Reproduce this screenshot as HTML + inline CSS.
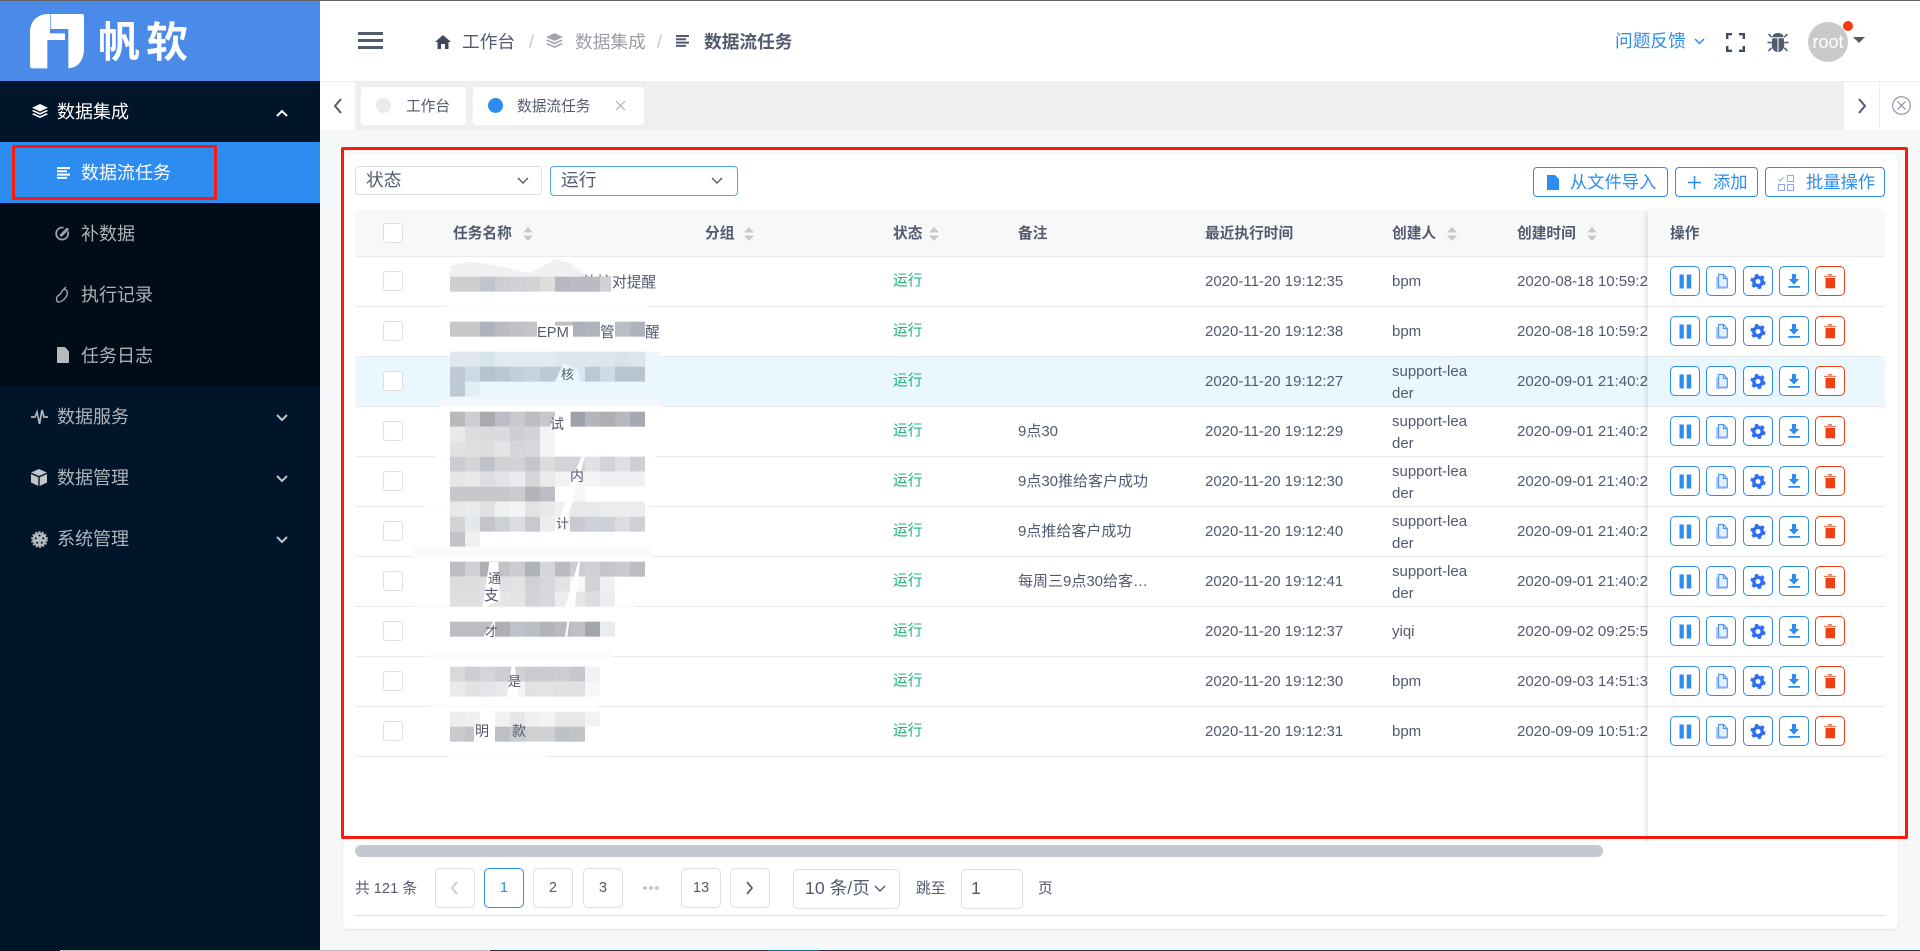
<!DOCTYPE html>
<html lang="zh"><head><meta charset="utf-8"><title>数据流任务</title>
<style>
*{box-sizing:border-box}
html,body{margin:0;padding:0;width:1920px;height:951px;overflow:hidden;background:#f5f7f9;font-family:"Liberation Sans","Noto Sans CJK SC",sans-serif;color:#515a6e}
.a,.r span,.r i,.r b{position:absolute;white-space:nowrap}
.m{font-size:18px;line-height:24px;height:24px;left:57px;color:rgba(255,255,255,.68)}
.s{left:81px;}
.f18{font-size:17.7px;line-height:24px;height:24px}
.f15{font-size:14.7px;line-height:22px;height:22px}
.r{position:absolute;left:355px;width:1293px;height:50px;border-bottom:1px solid #e8eaec;font-size:15px;line-height:21.5px}
.r i{left:28px;top:14px;width:20px;height:20px;border:1px solid #dcdee2;border-radius:3px;background:#fff}
.r .st{left:538px;top:14px;color:#1fb37a;font-size:14.7px}
.r .re{left:663px;top:14px}
.r .t{left:850px;top:14px}
.r .u{left:1037px;top:14px}
.r .u2{left:1037px;top:4px}
.r .c{left:1162px;top:14px}
.h{position:absolute;top:210px;font-size:14.7px;line-height:22px;height:22px;margin-top:13px;font-weight:bold;color:#515a6e;white-space:nowrap}
.sort{position:absolute;top:227px;width:10px;height:14px}
.ops{position:absolute;left:0;width:237px;height:50px;border-bottom:1px solid #e8eaec}
.b{position:absolute;top:9px;width:30px;height:30px;border:1px solid #2d8cf0;border-radius:5px;background:#fff}
.b svg{position:absolute;left:-1px;top:-1px;width:30px;height:30px}
.b.d{border-color:#ed4014}
.pg{position:absolute;top:868px;width:40px;height:40px;border:1px solid #dcdee2;border-radius:5px;text-align:center;font-size:14.7px;line-height:38px;background:#fff}
.btn{position:absolute;top:167px;height:30px;border:1px solid #2d8cf0;border-radius:4px;background:#fff}
.bt{position:absolute;top:170px;font-size:17.3px;line-height:24px;color:#2d8cf0;white-space:nowrap}
svg.i{position:absolute;overflow:visible}
#blur rect{width:15px;height:15px}
#blur rect.w{height:3px}
#blur rect.x{height:auto}
</style></head><body>
<svg width="0" height="0" style="position:absolute"><defs>
<symbol id="pa" viewBox="0 0 30 30"><rect x="9.5" y="8.5" width="4.3" height="14" fill="#2d8cf0"/><rect x="16.7" y="8.5" width="4.5" height="14" fill="#2d8cf0"/></symbol>
<symbol id="do" viewBox="0 0 30 30"><path d="M10 11h3v11h8v1H10z" fill="#b9c8fb"/><path d="M12.5 8.5h5l3.8 4v8.7h-8.8z M17.5 8.5v4h3.8" fill="#e6f0fd" stroke="#4b98f2" stroke-width="1.2"/></symbol>
<symbol id="ge" viewBox="0 0 30 30"><circle cx="15" cy="15.5" r="4.2" fill="none" stroke="#2d6ff0" stroke-width="3.4"/><circle cx="15" cy="15.5" r="6.4" fill="none" stroke="#2d6ff0" stroke-width="2.4" stroke-dasharray="3.4 3.3"/></symbol>
<symbol id="dl" viewBox="0 0 30 30"><path d="M13 8h4v5h3.2L15 18.6 9.800 13H13z" fill="#2d8cf0"/><rect x="9.300" y="20" width="11.700" height="1.800" fill="#2d8cf0"/></symbol>
<symbol id="tr" viewBox="0 0 30 30"><rect x="10.500" y="12" width="9.500" height="10.300" fill="#f0400f"/><rect x="9" y="9.800" width="12" height="1.400" fill="#f47f5f"/><rect x="13" y="8" width="4" height="1.600" fill="#f47f5f"/></symbol>
<symbol id="sc" viewBox="0 0 10 14"><path d="M5 0l5 5.500H0zM5 14L0 8.500h10z" fill="#c5c8ce"/></symbol>
<symbol id="la" viewBox="0 0 16 14"><path d="M8 0l8 3.700-8 3.800L0 3.700z" fill="currentColor"/><path d="M1.500 6L8 9l6.500-3L16 7l-8 3.700L0 7z" fill="currentColor"/><path d="M1.500 9.300l6.500 3 6.500-3L16 10.300 8 14 0 10.300z" fill="currentColor"/></symbol>
<symbol id="li" viewBox="0 0 13 12"><path d="M0 0h13v2H0zM0 3.300h10v2H0zM0 6.600h13v2H0zM0 9.900h10v2H0z" fill="currentColor"/></symbol>
</defs></svg>

<!-- sidebar -->
<div class="a" style="left:0;top:0;width:320px;height:951px;background:#00152a"></div>
<div class="a" style="left:0;top:0;width:320px;height:81px;background:#4a8be9"></div>
<svg class="i" style="left:20px;top:5px" width="70" height="70" viewBox="0 0 210 210"><path fill="#fff" d="M80 27C50 30 30 50 30 82V183Q30 190 38 190H82V105H135V85H90V27z"/><path fill="#fff" d="M92 27H185Q192 27 192 34V130C192 165 175 188 145 190V72H92z"/></svg>
<div class="a" style="left:98px;top:15px;font-size:42px;line-height:56px;font-weight:bold;color:#fff;letter-spacing:6px">帆软</div>
<div class="a" style="left:0;top:142px;width:320px;height:244px;background:#000c18"></div>
<div class="a" style="left:0;top:142px;width:320px;height:61px;background:#2d8cf0"></div>
<div class="a" style="left:12px;top:145px;width:205px;height:55px;border:3px solid #fa1a0c;border-radius:2px"></div>

<svg class="i" style="left:32px;top:104px;color:#fff" width="16" height="14"><use href="#la"/></svg>
<div class="a m" style="top:100px;color:#fff">数据集成</div>
<svg class="i" style="left:276px;top:109px" width="12" height="8" fill="none" stroke="#fff" stroke-width="2"><path d="M1 7l5-5 5 5"/></svg>

<svg class="i" style="left:57px;top:167px;color:#fff" width="13" height="12"><use href="#li"/></svg>
<div class="a m s" style="top:161px;color:#fff">数据流任务</div>

<svg class="i" style="left:55px;top:226px" width="15" height="15" fill="none" stroke="#9ea2a7" stroke-width="1.800"><path d="M12.800 5.500A6 6 0 1 1 8.500 1.700"/><path d="M5.500 10L13 2.500" stroke-width="3"/></svg>
<div class="a m s" style="top:222px">补数据</div>
<svg class="i" style="left:55px;top:286px" width="15" height="17" fill="none" stroke="#9ea2a7" stroke-width="1.400"><path d="M9 3c3 1 4 3 3 6-1 3-5 7-8.500 7C1.500 16 1 13 2 11c1-2 3-2 4-4 .5-1 .8-2 3-4zM9 3l2-2"/></svg>
<div class="a m s" style="top:283px">执行记录</div>
<svg class="i" style="left:57px;top:347px" width="12" height="16"><path d="M1 0h7l4 4.500V15a1 1 0 0 1-1 1H1a1 1 0 0 1-1-1V1a1 1 0 0 1 1-1z" fill="#b7babd"/></svg>
<div class="a m s" style="top:344px">任务日志</div>

<svg class="i" style="left:31px;top:408px" width="17" height="18" fill="none" stroke="#b2b6bb" stroke-width="1.700"><path d="M0 9h4l2-5 2.500 12L11 2l2 7h4"/></svg>
<div class="a m" style="top:405px">数据服务</div>
<svg class="i" style="left:31px;top:469px" width="16" height="17"><path d="M8 0l8 3.500L8 7 0 3.500z" fill="#c2c5c9"/><path d="M0 5l7.300 3.200V17L0 13.500zM16 5L8.700 8.200V17l7.300-3.500z" fill="#c2c5c9"/></svg>
<div class="a m" style="top:466px">数据管理</div>
<svg class="i" style="left:31px;top:531px" width="17" height="17"><circle cx="8.500" cy="8.500" r="7" fill="#b5b8bc"/><circle cx="8.500" cy="8.500" r="7.700" fill="none" stroke="#b5b8bc" stroke-width="1.400" stroke-dasharray="2 1.500"/><circle cx="8.500" cy="4.500" r="1" fill="#00152a"/><circle cx="4.700" cy="7.300" r="1" fill="#00152a"/><circle cx="12.300" cy="7.300" r="1" fill="#00152a"/><circle cx="6.200" cy="11.700" r="1" fill="#00152a"/><circle cx="10.800" cy="11.700" r="1" fill="#00152a"/></svg>
<div class="a m" style="top:527px">系统管理</div>
<svg class="i" style="left:276px;top:414px" width="12" height="8" fill="none" stroke="#c0c4c9" stroke-width="2"><path d="M1 1l5 5 5-5"/></svg>
<svg class="i" style="left:276px;top:475px" width="12" height="8" fill="none" stroke="#c0c4c9" stroke-width="2"><path d="M1 1l5 5 5-5"/></svg>
<svg class="i" style="left:276px;top:536px" width="12" height="8" fill="none" stroke="#c0c4c9" stroke-width="2"><path d="M1 1l5 5 5-5"/></svg>

<!-- header -->
<div class="a" style="left:320px;top:0;width:1600px;height:81px;background:#fff"></div>
<div class="a" style="left:320px;top:81px;width:1600px;height:1px;background:#eceef0"></div>
<div class="a" style="left:358px;top:32px;width:25px;height:3px;background:#515a6e"></div>
<div class="a" style="left:358px;top:39px;width:25px;height:3px;background:#515a6e"></div>
<div class="a" style="left:358px;top:46px;width:25px;height:3px;background:#515a6e"></div>
<svg class="i" style="left:435px;top:35px" width="16" height="14"><path d="M8 0l8 7h-2.500v7H10V9H6v5H2.500V7H0z" fill="#3f4a5e"/></svg>
<div class="a f18" style="left:462px;top:30px">工作台</div>
<div class="a f18" style="left:529px;top:30px;color:#c5c8ce">/</div>
<svg class="i" style="left:546px;top:33px;color:#a2a6ac" width="17" height="15"><use href="#la"/></svg>
<div class="a f18" style="left:575px;top:30px;color:#9a9ea5">数据集成</div>
<div class="a f18" style="left:657px;top:30px;color:#c5c8ce">/</div>
<svg class="i" style="left:676px;top:35px;color:#515a6e" width="13" height="12"><use href="#li"/></svg>
<div class="a f18" style="left:704px;top:30px;font-weight:bold">数据流任务</div>
<div class="a f18" style="left:1615px;top:29px;color:#2d8cf0">问题反馈</div>
<svg class="i" style="left:1694px;top:38px" width="11" height="7" fill="none" stroke="#2d8cf0" stroke-width="1.500"><path d="M1 1l4.500 4.500L10 1"/></svg>
<svg class="i" style="left:1726px;top:33px" width="19" height="19" fill="none" stroke="#3f4a5e" stroke-width="2.400"><path d="M1.200 6V1.200H6M13 1.200h4.800V6M1.200 13v4.800H6M13 17.800h4.800V13"/></svg>
<svg class="i" style="left:1767px;top:32px" width="22" height="21" viewBox="0 0 20 20"><path d="M10 1c3 0 5 1.500 5.500 4h-11C5 2.500 7 1 10 1z" fill="#515a6e"/><path d="M4.500 6h5V19C6.500 19 4 16 4 12zM10.500 6h5l.5 6c0 4-2.500 7-5.500 7z" fill="#515a6e"/><path d="M4 5L1 2M16 5l3-3M4 10H0M16 10h4M4 15l-3 3M16 15l3 3" stroke="#515a6e" stroke-width="1.500"/></svg>
<div class="a" style="left:1808px;top:22px;width:40px;height:40px;border-radius:50%;background:#c9c9c9;color:#fff;font-size:18px;line-height:40px;text-align:center">root</div>
<div class="a" style="left:1843px;top:21px;width:10px;height:10px;border-radius:50%;background:#f03c14"></div>
<svg class="i" style="left:1853px;top:37px" width="12" height="6"><path d="M0 0h12L6 6z" fill="#515a6e"/></svg>

<!-- tags -->
<div class="a" style="left:320px;top:82px;width:1600px;height:48px;background:#fff"></div>
<div class="a" style="left:355px;top:82px;width:1489px;height:48px;background:#efefef"></div>
<div class="a" style="left:1879px;top:82px;width:1px;height:48px;background:#eceef0"></div>
<svg class="i" style="left:333px;top:98px" width="10" height="16" fill="none" stroke="#515a6e" stroke-width="2"><path d="M8 1L2 8l6 7"/></svg>
<svg class="i" style="left:1857px;top:98px" width="10" height="16" fill="none" stroke="#515a6e" stroke-width="2"><path d="M2 1l6 7-6 7"/></svg>
<svg class="i" style="left:1892px;top:96px" width="19" height="19" fill="none" stroke="#7d8594" stroke-width="1"><circle cx="9.500" cy="9.500" r="8.800"/><path d="M5.500 5.500l8 8M13.500 5.500l-8 8"/></svg>
<div class="a" style="left:361px;top:87px;width:105px;height:38px;background:#fff;border-radius:3px"></div>
<div class="a" style="left:473px;top:87px;width:171px;height:38px;background:#fff;border-radius:3px"></div>
<div class="a" style="left:376px;top:98px;width:15px;height:15px;border-radius:50%;background:#e8eaec"></div>
<div class="a f15" style="left:406px;top:96px">工作台</div>
<div class="a" style="left:488px;top:98px;width:15px;height:15px;border-radius:50%;background:#2d8cf0"></div>
<div class="a f15" style="left:517px;top:96px">数据流任务</div>
<svg class="i" style="left:615px;top:100px" width="11" height="11" fill="none" stroke="#a6abb3" stroke-width="1"><path d="M1 1l9 9M10 1l-9 9"/></svg>

<!-- card -->
<div class="a" style="left:343px;top:154px;width:1555px;height:775px;background:#fff;border-radius:6px;box-shadow:0 1px 2px rgba(0,0,0,.08)"></div>

<div class="a" style="left:355px;top:166px;width:187px;height:29px;border:1px solid #dcdee2;border-radius:4px"></div>
<div class="a f18" style="left:366px;top:168px">状态</div>
<svg class="i" style="left:517px;top:177px" width="12" height="8" fill="none" stroke="#515a6e" stroke-width="1.400"><path d="M1 1l5 5 5-5"/></svg>
<div class="a" style="left:550px;top:166px;width:188px;height:30px;border:1px solid #57a3f3;border-radius:4px"></div>
<div class="a f18" style="left:561px;top:168px">运行</div>
<svg class="i" style="left:711px;top:177px" width="12" height="8" fill="none" stroke="#515a6e" stroke-width="1.400"><path d="M1 1l5 5 5-5"/></svg>

<div class="btn" style="left:1533px;width:135px"></div>
<svg class="i" style="left:1547px;top:175px" width="12" height="15"><path d="M0 0h8l4 4v11H0z" fill="#2d8cf0"/></svg>
<div class="bt" style="left:1570px">从文件导入</div>
<div class="btn" style="left:1675px;width:83px"></div>
<svg class="i" style="left:1688px;top:176px" width="13" height="13" stroke="#2d8cf0" stroke-width="1.500"><path d="M6.500 0v13M0 6.500h13"/></svg>
<div class="bt" style="left:1713px">添加</div>
<div class="btn" style="left:1765px;width:120px"></div>
<svg class="i" style="left:1778px;top:174px" width="16" height="17" fill="none" stroke="#8fa8f0" stroke-width="1"><path d="M.5 5l2 2 3-4"/><rect x="9.500" y="1.500" width="6" height="6"/><rect x=".5" y="10.500" width="6" height="6"/><rect x="9.500" y="10.500" width="6" height="6"/></svg>
<div class="bt" style="left:1806px">批量操作</div>

<!-- table header -->
<div class="a" style="left:355px;top:210px;width:1530px;height:47px;background:#f8f8f9;border-bottom:1px solid #e8eaec"></div>
<div class="a" style="left:383px;top:223px;width:20px;height:20px;border:1px solid #dcdee2;border-radius:3px;background:#fff"></div>
<div class="h" style="left:453px">任务名称</div><svg class="sort" style="left:523px"><use href="#sc"/></svg>
<div class="h" style="left:705px">分组</div><svg class="sort" style="left:744px"><use href="#sc"/></svg>
<div class="h" style="left:893px">状态</div><svg class="sort" style="left:929px"><use href="#sc"/></svg>
<div class="h" style="left:1018px">备注</div>
<div class="h" style="left:1205px">最近执行时间</div>
<div class="h" style="left:1392px">创建人</div><svg class="sort" style="left:1447px"><use href="#sc"/></svg>
<div class="h" style="left:1517px">创建时间</div><svg class="sort" style="left:1587px"><use href="#sc"/></svg>

<!-- rows -->
<div class="r" style="top:257px"><i></i><span class="st">运行</span><span class="t">2020-11-20 19:12:35</span><span class="u">bpm</span><span class="c">2020-08-18 10:59:28</span></div>
<div class="r" style="top:307px"><i></i><span class="st">运行</span><span class="t">2020-11-20 19:12:38</span><span class="u">bpm</span><span class="c">2020-08-18 10:59:28</span></div>
<div class="r" style="top:357px;background:#ebf7ff"><i></i><span class="st">运行</span><span class="t">2020-11-20 19:12:27</span><span class="u2">support-lea<br>der</span><span class="c">2020-09-01 21:40:28</span></div>
<div class="r" style="top:407px"><i></i><span class="st">运行</span><span class="re">9点30</span><span class="t">2020-11-20 19:12:29</span><span class="u2">support-lea<br>der</span><span class="c">2020-09-01 21:40:28</span></div>
<div class="r" style="top:457px"><i></i><span class="st">运行</span><span class="re">9点30推给客户成功</span><span class="t">2020-11-20 19:12:30</span><span class="u2">support-lea<br>der</span><span class="c">2020-09-01 21:40:28</span></div>
<div class="r" style="top:507px"><i></i><span class="st">运行</span><span class="re">9点推给客户成功</span><span class="t">2020-11-20 19:12:40</span><span class="u2">support-lea<br>der</span><span class="c">2020-09-01 21:40:28</span></div>
<div class="r" style="top:557px"><i></i><span class="st">运行</span><span class="re">每周三9点30给客…</span><span class="t">2020-11-20 19:12:41</span><span class="u2">support-lea<br>der</span><span class="c">2020-09-01 21:40:28</span></div>
<div class="r" style="top:607px"><i></i><span class="st">运行</span><span class="t">2020-11-20 19:12:37</span><span class="u">yiqi</span><span class="c">2020-09-02 09:25:58</span></div>
<div class="r" style="top:657px"><i></i><span class="st">运行</span><span class="t">2020-11-20 19:12:30</span><span class="u">bpm</span><span class="c">2020-09-03 14:51:38</span></div>
<div class="r" style="top:707px"><i></i><span class="st">运行</span><span class="t">2020-11-20 19:12:31</span><span class="u">bpm</span><span class="c">2020-09-09 10:51:28</span></div>

<!-- pixelated blur -->
<svg id="blur" class="i" style="left:0;top:0" width="1920" height="951" font-size="14.700" fill="#515a6e" font-family="Liberation Sans,Noto Sans CJK SC,sans-serif">
<rect class="w" x="445" y="305" width="203" fill="#fdfdfd" style="width:203px"/>
<rect class="w" x="440" y="405" style="width:222px" fill="#fdfdfd"/>
<rect class="w" x="435" y="455" style="width:220px" fill="#fdfdfd"/>
<rect class="w" x="423" y="505" style="width:227px" fill="#fdfdfd"/>
<rect class="w" x="413" y="555" style="width:240px" fill="#fcfcfc"/>
<rect class="w" x="415" y="605" style="width:220px" fill="#fcfcfc"/>
<rect class="w" x="427" y="655" style="width:185px" fill="#fbfbfb"/>
<rect class="w" x="428" y="705" style="width:169px" fill="#fbfbfb"/>
<rect class="w" x="447" y="755" style="width:100px" fill="#fdfdfd"/>
<text x="582" y="287">效核</text>
<text x="612" y="287">对提醒</text>
<text x="537" y="337">EPM</text><text x="600" y="337">管</text><text x="645" y="337">醒</text>
<path d="M450 276.700V266L470 261.700 493 265 530 273 556 259 570 263 587 276.700z" fill="#eef0f1"/>
<g transform="translate(0 276.670)"><rect x="450" fill="#cfcfd1"/><rect x="465" fill="#cfcfd1"/><rect x="480" fill="#c0c5cd"/><rect x="495" fill="#cdcfd4"/><rect x="510" fill="#d0d1d4"/><rect x="525" fill="#d2d3d6"/><rect x="540" fill="#dcdedc"/><rect x="555" fill="#b7b8bf"/><rect x="570" fill="#babcc3"/><rect x="585" fill="#bbbcc2"/><rect x="600" fill="#d0d1d4" style="width:11px"/></g>
<g transform="translate(0 321.670)"><rect x="450" fill="#c7c7ca"/><rect x="465" fill="#c7c7ca"/><rect x="480" fill="#adb2bc"/><rect x="495" fill="#bbbcc2"/><rect x="510" fill="#c0c1c5"/><rect x="522" fill="#c3c4c8"/><rect x="573" fill="#adb1bb"/><rect x="585" fill="#aeb3bc"/><rect x="615" fill="#bbbdc4"/><rect x="630" fill="#aeb2bb"/></g>
<rect x="555" y="321.670" fill="#bfc1c7" style="width:18px;height:4px"/>
<g transform="translate(0 351.670)"><rect x="450" fill="#dfe6ee"/><rect x="465" fill="#dfe6ee"/><rect x="480" fill="#d8e4ec"/><rect x="495" fill="#e2eaf1"/><rect x="510" fill="#e2eaf1"/><rect x="525" fill="#e2eaf1"/><rect x="540" fill="#e2eaf1"/><rect x="555" fill="#dce6ee"/><rect x="570" fill="#dce6ee"/><rect x="585" fill="#dce6ee"/><rect x="600" fill="#dde6ee"/><rect x="615" fill="#d9e2ea"/><rect x="630" fill="#dde5ec"/><rect x="645" fill="#edf5fc"/></g>
<g transform="translate(0 366.670)"><rect x="450" fill="#c0cad5"/><rect x="465" fill="#cbdbe6"/><rect x="480" fill="#b7c4ce"/><rect x="495" fill="#bac6d0"/><rect x="510" fill="#c3d0d9"/><rect x="525" fill="#c7d4dd"/><rect x="540" fill="#bccad4"/><rect x="555" fill="#bccad4"/><rect x="570" fill="#dce6ee"/><rect x="585" fill="#b9c9d5"/><rect x="600" fill="#cbdce6"/><rect x="615" fill="#b8c5cf"/><rect x="630" fill="#b8c5cf"/><rect x="645" fill="#edf5fc"/></g>
<g transform="translate(0 381.670)"><rect x="450" fill="#bfc9d4"/><rect x="465" fill="#e1eef6"/></g>
<rect class="x" x="440" y="396.670" style="width:222px;height:9px" fill="#f1f7fd"/>
<g transform="translate(0 411.670)"><rect x="450" fill="#b9b9bd"/><rect x="465" fill="#cdced1"/><rect x="480" fill="#a9aab0"/><rect x="495" fill="#bcbec5"/><rect x="510" fill="#c9cace"/><rect x="525" fill="#bcbdc2"/><rect x="540" fill="#c6c7ca"/><rect x="570" fill="#a0a2ab"/><rect x="585" fill="#b3b5bb"/><rect x="600" fill="#aeaeb3"/><rect x="615" fill="#b4b8bf"/><rect x="630" fill="#a8a9b0"/></g>
<g transform="translate(0 426.670)"><rect x="450" fill="#e8e9ea"/><rect x="465" fill="#dcdcde"/><rect x="480" fill="#dadadd"/><rect x="495" fill="#dadbde"/><rect x="510" fill="#d0ced3"/><rect x="525" fill="#d2d2d7"/><rect x="540" fill="#f3f4f6"/></g>
<g transform="translate(0 441.670)"><rect x="450" fill="#e2e2e3"/><rect x="465" fill="#dddee0"/><rect x="480" fill="#dcdddf"/><rect x="495" fill="#e3e4e6"/><rect x="510" fill="#d5d6da"/><rect x="525" fill="#d7d8dc"/><rect x="540" fill="#f3f4f6"/></g>
<g transform="translate(0 456.670)"><rect x="450" fill="#cccdd0"/><rect x="465" fill="#d4d5d8"/><rect x="480" fill="#bfc2c8"/><rect x="495" fill="#cfd1d5"/><rect x="510" fill="#d2d3d6"/><rect x="525" fill="#c3c6cb"/><rect x="540" fill="#dbdcde"/><rect x="555" fill="#d2d3d7"/><rect x="570" fill="#d2d3d7"/><rect x="585" fill="#e0e1e4"/><rect x="600" fill="#d2d3d7"/><rect x="615" fill="#dfe0e3"/><rect x="630" fill="#ced0d4"/></g>
<g transform="translate(0 471.670)"><rect x="450" fill="#e6e6e7"/><rect x="465" fill="#e9e9ea"/><rect x="480" fill="#dedee0"/><rect x="495" fill="#e4e4e6"/><rect x="510" fill="#ebebed"/><rect x="525" fill="#d5d6d9"/><rect x="540" fill="#ebebed"/><rect x="555" fill="#f3f3f4"/><rect x="570" fill="#f3f4f5"/><rect x="585" fill="#f3f4f5"/><rect x="600" fill="#f0f0f2"/><rect x="615" fill="#efeff1"/><rect x="630" fill="#eff0f2"/></g>
<g transform="translate(0 486.670)"><rect x="450" fill="#c7c8cb"/><rect x="465" fill="#c7c8cb"/><rect x="480" fill="#c7c8cb"/><rect x="495" fill="#c7c8cb"/><rect x="510" fill="#cbccd0"/><rect x="525" fill="#b2b4ba"/><rect x="540" fill="#bbbdc3"/><rect x="570" fill="#f5f6f7"/></g>
<g transform="translate(0 501.670)"><rect x="450" fill="#e7e8ea"/><rect x="465" fill="#e9eaeb"/><rect x="480" fill="#e0e1e3"/><rect x="495" fill="#eff0f1"/><rect x="510" fill="#f3f4f5"/><rect x="525" fill="#e2e3e5"/><rect x="540" fill="#e8e9eb"/><rect x="555" fill="#f0f0f1"/><rect x="570" fill="#e7e8ea"/><rect x="585" fill="#e7e8ea"/><rect x="600" fill="#ebecee"/><rect x="615" fill="#ebecee"/><rect x="630" fill="#ebecee"/></g>
<g transform="translate(0 516.670)"><rect x="450" fill="#d2d3d5"/><rect x="465" fill="#e5e8ea"/><rect x="480" fill="#c3c4c8"/><rect x="495" fill="#cdd0d4"/><rect x="510" fill="#dbdde0"/><rect x="525" fill="#c6c9ce"/><rect x="540" fill="#ebecee"/><rect x="555" fill="#f8f8f9"/><rect x="570" fill="#c8cacf"/><rect x="585" fill="#cdd2d8"/><rect x="600" fill="#cfd0d5"/><rect x="615" fill="#dbdde0"/><rect x="630" fill="#cfd0d4"/></g>
<g transform="translate(0 531.670)"><rect x="450" fill="#c2c3c7"/><rect x="465" fill="#eeeff0"/></g>
<rect class="x" x="413" y="546.670" style="width:240px;height:9px" fill="#fbfbfb"/>
<g transform="translate(0 561.670)"><rect x="450" fill="#bcbdc1"/><rect x="465" fill="#cfd1d4"/><rect x="480" fill="#aeafb5"/><rect x="495" fill="#c1c3c8"/><rect x="510" fill="#cbcdd1"/><rect x="525" fill="#aeb2b9"/><rect x="540" fill="#d3d5d8"/><rect x="555" fill="#b9bbc0"/><rect x="570" fill="#ccced2"/><rect x="585" fill="#cdd0d4"/><rect x="600" fill="#c3c5ca"/><rect x="615" fill="#c9cace"/><rect x="630" fill="#bcbdc2"/></g>
<g transform="translate(0 576.670)"><rect x="450" fill="#dbdcde"/><rect x="465" fill="#dbdcde"/><rect x="480" fill="#dedfe1"/><rect x="495" fill="#e0e1e3"/><rect x="510" fill="#e1e2e4"/><rect x="525" fill="#cfd1d4"/><rect x="540" fill="#d5d7da"/><rect x="555" fill="#e2e3e5"/><rect x="570" fill="#f8f8f8"/><rect x="585" fill="#d1d2d5"/><rect x="600" fill="#eff0f3"/></g>
<g transform="translate(0 591.670)"><rect x="450" fill="#dddee0"/><rect x="465" fill="#dddee0"/><rect x="480" fill="#e1e2e4"/><rect x="495" fill="#e5e6e8"/><rect x="510" fill="#e3e4e6"/><rect x="525" fill="#d3d4d7"/><rect x="540" fill="#d7d8db"/><rect x="555" fill="#ecedef"/><rect x="570" fill="#e6e6e4"/><rect x="585" fill="#dcdde0"/><rect x="600" fill="#ecedf1"/></g>
<g transform="translate(0 621.670)"><rect x="450" fill="#bdbcc1"/><rect x="465" fill="#bdbcc1"/><rect x="480" fill="#bcbdc1"/><rect x="495" fill="#afb0b5"/><rect x="510" fill="#bfc2c8"/><rect x="525" fill="#bbbec5"/><rect x="540" fill="#b1b4b9"/><rect x="555" fill="#b8babf"/><rect x="570" fill="#bec0c4"/><rect x="585" fill="#a3a5ad"/><rect x="600" fill="#eaedf0"/></g>
<rect class="x" x="427" y="651.670" style="width:185px;height:4px" fill="#fbfbfb"/>
<g transform="translate(0 666.670)"><rect x="450" fill="#d8d9da"/><rect x="465" fill="#ccced3"/><rect x="480" fill="#d3d5d9"/><rect x="495" fill="#cdced2"/><rect x="510" fill="#d0d1d5"/><rect x="525" fill="#c9cbd0"/><rect x="540" fill="#caccd1"/><rect x="555" fill="#cdced3"/><rect x="570" fill="#c6c8cc"/><rect x="585" fill="#f0f3f6"/></g>
<g transform="translate(0 681.670)"><rect x="450" fill="#e9eaeb"/><rect x="465" fill="#e1e2e4"/><rect x="480" fill="#e4e5e8"/><rect x="495" fill="#e8e9eb"/><rect x="510" fill="#f4f4f5"/><rect x="525" fill="#e1e2e4"/><rect x="540" fill="#e2e3e5"/><rect x="555" fill="#e0e1e3"/><rect x="570" fill="#e0e1e3"/><rect x="585" fill="#f5f7f8"/></g>
<g transform="translate(0 711.670)"><rect x="450" fill="#ecedee"/><rect x="465" fill="#eeefef"/><rect x="495" fill="#f0f1f2"/><rect x="510" fill="#e6e7e9"/><rect x="525" fill="#eef0f0"/><rect x="540" fill="#f2f3f2"/><rect x="555" fill="#e7e8ea"/><rect x="570" fill="#e7e8ea"/><rect x="585" fill="#f1f3f5"/></g>
<g transform="translate(0 726.670)"><rect x="450" fill="#c9cace"/><rect x="465" fill="#c1c3c7" style="width:9px"/><rect x="495" fill="#bcc0c5"/><rect x="510" fill="#c8cace"/><rect x="525" fill="#cfd0d2"/><rect x="540" fill="#cfd0d2"/><rect x="555" fill="#bdc1c8"/><rect x="570" fill="#c2c3c6"/></g>
<!-- cuts revealing the original text -->
<g transform="translate(330 200) scale(.3333)">
<path d="M675 545L700 490 745 510 750 545z" fill="#ebf7ff"/>
<path d="M660 680L680 635H722V680z" fill="#fff"/>
<path d="M695 905L755 770H765L725 905z" fill="#fff"/>
</g>
<g transform="translate(330 500) scale(.3333)">
<path d="M670 100L710 0H730L695 100z" fill="#fff"/>
<path d="M458 320L478 186H505L510 300 470 320z" fill="#fff"/>
<path d="M705 320L745 186H750L735 320z" fill="#fff"/>
<path d="M460 410L490 365H495V410z" fill="#fff"/>
<path d="M530 590L545 500H555L565 590z" fill="#fff"/>
<path d="M705 410L712 365 718 365 712 410z" fill="#fff"/>
</g>
<text x="561" y="379" font-size="13">核</text>
<text x="550" y="429" font-size="14">试</text>
<text x="570" y="481" font-size="14">内</text>
<text x="556" y="528" font-size="13">计</text>
<text x="488" y="583" font-size="13">通</text>
<text x="484" y="600">支</text>
<text x="485" y="636" font-size="13">才</text>
<text x="508" y="686" font-size="13">是</text>
<text x="475" y="736" font-size="14">明</text>
<text x="512" y="736" font-size="14">款</text>
</svg>

<!-- fixed column -->
<div class="a" style="left:1648px;top:210px;width:237px;height:634px;background:#fff;box-shadow:-3px 0 6px -2px rgba(0,0,0,.14)">
<div class="ops" style="top:0;height:47px;background:#f8f8f9"><div class="a" style="left:22px;top:13px;font-size:14.7px;line-height:22px;font-weight:bold">操作</div></div>
<div class="ops" style="top:47px"><div class="b" style="left:22px"><svg><use href="#pa"/></svg></div><div class="b" style="left:58px"><svg><use href="#do"/></svg></div><div class="b" style="left:95px"><svg><use href="#ge"/></svg></div><div class="b" style="left:131px"><svg><use href="#dl"/></svg></div><div class="b d" style="left:167px"><svg><use href="#tr"/></svg></div></div>
<div class="ops" style="top:97px"><div class="b" style="left:22px"><svg><use href="#pa"/></svg></div><div class="b" style="left:58px"><svg><use href="#do"/></svg></div><div class="b" style="left:95px"><svg><use href="#ge"/></svg></div><div class="b" style="left:131px"><svg><use href="#dl"/></svg></div><div class="b d" style="left:167px"><svg><use href="#tr"/></svg></div></div>
<div class="ops" style="top:147px;background:#ebf7ff"><div class="b" style="left:22px"><svg><use href="#pa"/></svg></div><div class="b" style="left:58px"><svg><use href="#do"/></svg></div><div class="b" style="left:95px"><svg><use href="#ge"/></svg></div><div class="b" style="left:131px"><svg><use href="#dl"/></svg></div><div class="b d" style="left:167px"><svg><use href="#tr"/></svg></div></div>
<div class="ops" style="top:197px"><div class="b" style="left:22px"><svg><use href="#pa"/></svg></div><div class="b" style="left:58px"><svg><use href="#do"/></svg></div><div class="b" style="left:95px"><svg><use href="#ge"/></svg></div><div class="b" style="left:131px"><svg><use href="#dl"/></svg></div><div class="b d" style="left:167px"><svg><use href="#tr"/></svg></div></div>
<div class="ops" style="top:247px"><div class="b" style="left:22px"><svg><use href="#pa"/></svg></div><div class="b" style="left:58px"><svg><use href="#do"/></svg></div><div class="b" style="left:95px"><svg><use href="#ge"/></svg></div><div class="b" style="left:131px"><svg><use href="#dl"/></svg></div><div class="b d" style="left:167px"><svg><use href="#tr"/></svg></div></div>
<div class="ops" style="top:297px"><div class="b" style="left:22px"><svg><use href="#pa"/></svg></div><div class="b" style="left:58px"><svg><use href="#do"/></svg></div><div class="b" style="left:95px"><svg><use href="#ge"/></svg></div><div class="b" style="left:131px"><svg><use href="#dl"/></svg></div><div class="b d" style="left:167px"><svg><use href="#tr"/></svg></div></div>
<div class="ops" style="top:347px"><div class="b" style="left:22px"><svg><use href="#pa"/></svg></div><div class="b" style="left:58px"><svg><use href="#do"/></svg></div><div class="b" style="left:95px"><svg><use href="#ge"/></svg></div><div class="b" style="left:131px"><svg><use href="#dl"/></svg></div><div class="b d" style="left:167px"><svg><use href="#tr"/></svg></div></div>
<div class="ops" style="top:397px"><div class="b" style="left:22px"><svg><use href="#pa"/></svg></div><div class="b" style="left:58px"><svg><use href="#do"/></svg></div><div class="b" style="left:95px"><svg><use href="#ge"/></svg></div><div class="b" style="left:131px"><svg><use href="#dl"/></svg></div><div class="b d" style="left:167px"><svg><use href="#tr"/></svg></div></div>
<div class="ops" style="top:447px"><div class="b" style="left:22px"><svg><use href="#pa"/></svg></div><div class="b" style="left:58px"><svg><use href="#do"/></svg></div><div class="b" style="left:95px"><svg><use href="#ge"/></svg></div><div class="b" style="left:131px"><svg><use href="#dl"/></svg></div><div class="b d" style="left:167px"><svg><use href="#tr"/></svg></div></div>
<div class="ops" style="top:497px"><div class="b" style="left:22px"><svg><use href="#pa"/></svg></div><div class="b" style="left:58px"><svg><use href="#do"/></svg></div><div class="b" style="left:95px"><svg><use href="#ge"/></svg></div><div class="b" style="left:131px"><svg><use href="#dl"/></svg></div><div class="b d" style="left:167px"><svg><use href="#tr"/></svg></div></div>
</div>

<!-- scrollbar -->
<div class="a" style="left:355px;top:845px;width:1248px;height:12px;background:#c5c8d0;border-radius:6px"></div>

<!-- red highlight -->
<div class="a" style="left:341px;top:147px;width:1567px;height:692px;border:3px solid #fa1a0c;border-radius:2px"></div>

<!-- pagination -->
<div class="a f15" style="left:355px;top:878px">共 121 条</div>
<div class="pg" style="left:435px"><svg class="i" style="left:14px;top:12px" width="10" height="14" fill="none" stroke="#c5c8ce" stroke-width="1.700"><path d="M7 1L2 7l5 6"/></svg></div>
<div class="pg" style="left:484px;border-color:#2d8cf0;color:#2d8cf0">1</div>
<div class="pg" style="left:533px">2</div>
<div class="pg" style="left:583px">3</div>
<svg class="i" style="left:642px;top:885px" width="18" height="6"><circle cx="3" cy="3" r="2" fill="#c5c8ce"/><circle cx="9" cy="3" r="2" fill="#c5c8ce"/><circle cx="15" cy="3" r="2" fill="#c5c8ce"/></svg>
<div class="pg" style="left:681px">13</div>
<div class="pg" style="left:730px"><svg class="i" style="left:14px;top:12px" width="10" height="14" fill="none" stroke="#515a6e" stroke-width="1.700"><path d="M2 1l5 6-5 6"/></svg></div>
<div class="a" style="left:793px;top:869px;width:107px;height:40px;border:1px solid #dcdee2;border-radius:5px"></div>
<div class="a f18" style="left:805px;top:876px">10 条/页</div>
<svg class="i" style="left:874px;top:885px" width="12" height="8" fill="none" stroke="#515a6e" stroke-width="1.400"><path d="M1 1l5 5 5-5"/></svg>
<div class="a f15" style="left:916px;top:878px">跳至</div>
<div class="a" style="left:961px;top:869px;width:62px;height:40px;border:1px solid #dcdee2;border-radius:5px"></div>
<div class="a f18" style="left:971px;top:876px">1</div>
<div class="a f15" style="left:1038px;top:878px">页</div>
<div class="a" style="left:355px;top:915px;width:1530px;height:1px;background:#dcdee2"></div>

<!-- browser edges -->
<div class="a" style="left:0;top:0;width:1920px;height:1px;background:#606060"></div>
<div class="a" style="left:60px;top:950px;width:430px;height:1px;background:#bdbdbd"></div>
<div class="a" style="left:490px;top:950px;width:1430px;height:1px;background:#1f3a4d"></div>
<div class="a" style="left:768px;top:950px;width:52px;height:1px;background:#166aa8"></div>
</body></html>
